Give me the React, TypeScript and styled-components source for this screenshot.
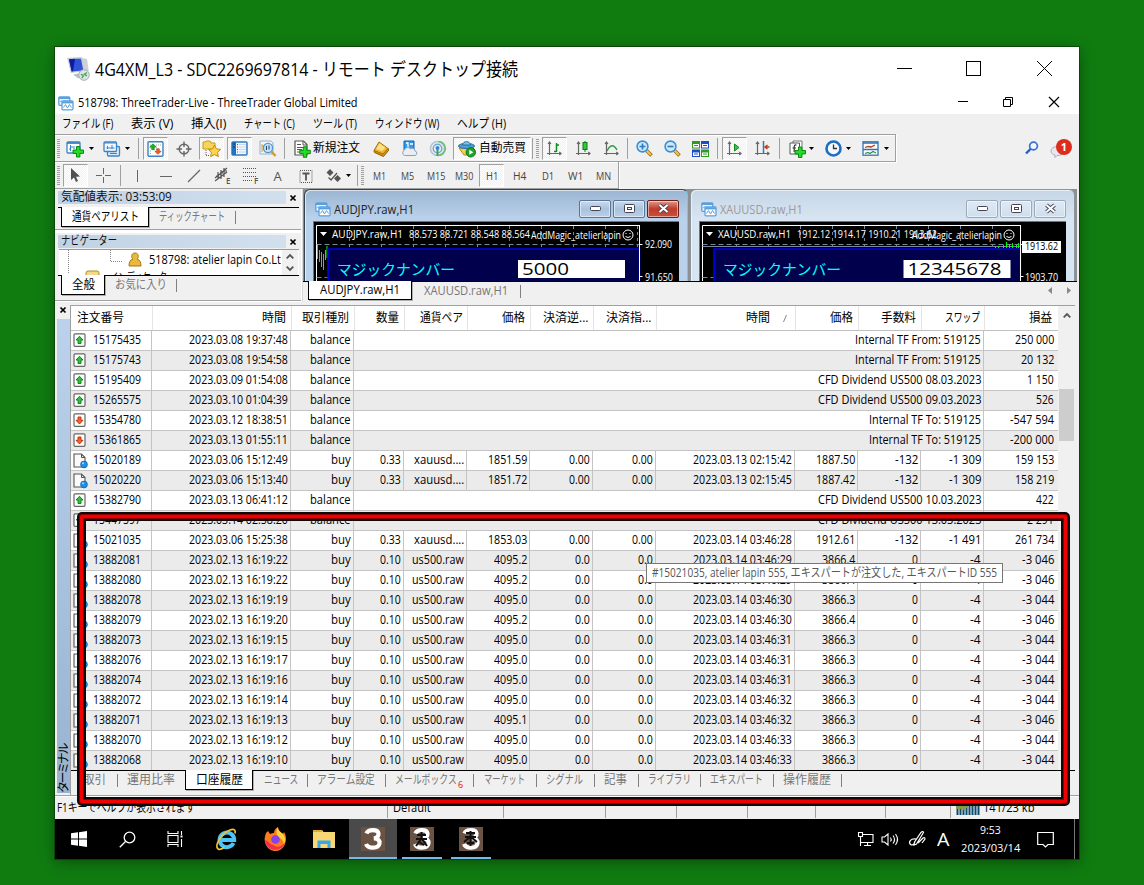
import React, { useLayoutEffect, useRef, useState } from 'react';
import styled, { createGlobalStyle, css } from 'styled-components';

const UI = '"Open Sans", "Noto Sans CJK JP", sans-serif';
const GREY = '#a0a0a0';

const Global = createGlobalStyle`
  body { margin: 0; background: #107c10; font-family: ${UI}; font-size: 12px; color: #000; }
  * { box-sizing: border-box; }
  svg { display: block; flex: none; overflow: visible; }
`;

/* ---------- condensed text, squeezed to a given width ---------- */
const FitBox = styled.span<{ $w: number; $ml?: number; $up?: number; $c?: string; $size?: number }>`
  display: block;
  flex: none;
  width: ${p => p.$w}px;
  margin-left: ${p => p.$ml || 0}px;
  padding-bottom: ${p => p.$up || 0}px;
  white-space: pre;
  line-height: 18px;
  font-size: ${p => p.$size || 12}px;
  color: ${p => p.$c || 'inherit'};
`;
const FitText = styled.span`
  display: inline-block;
  transform-origin: left center;
`;
type FitProps = { w: number; ml?: number; up?: number; c?: string; size?: number; children: string };
function Fit({ w, ml, up, c, size, children }: FitProps) {
  const ref = useRef<HTMLSpanElement>(null);
  const [scale, setScale] = useState(1);
  useLayoutEffect(() => {
    const el = ref.current;
    if (el && el.offsetWidth) setScale(w / el.offsetWidth);
  }, [w, children]);
  return (
    <FitBox $w={w} $ml={ml} $up={up} $c={c} $size={size}>
      <FitText ref={ref} style={{ transform: `scaleX(${scale})` }}>{children}</FitText>
    </FitBox>
  );
}

/* ---------- window ---------- */
const Desktop = styled.div`
  width: 1144px;
  height: 885px;
  padding: 47px 65px 26px 55px;
  background: #107c10;
  overflow: hidden;
`;
const Session = styled.div`
  position: relative;
  display: flex;
  flex-direction: column;
  width: 1024px;
  height: 812px;
  background: #f0f0f0;
  box-shadow: 0 0 0 1px rgba(10, 60, 10, 0.75), 0 3px 14px rgba(0, 0, 0, 0.38);
`;
const RemoteTitle = styled.div`
  display: flex;
  align-items: center;
  height: 44px;
  padding: 0 27px 0 12px;
  background: #fff;
`;
const AppTitle = styled.div`
  display: flex;
  align-items: center;
  height: 23px;
  padding: 0 20px 0 3px;
  background: #fff;
`;
const Controls = styled.div<{ $gap: number; $up?: number }>`
  display: flex;
  align-items: center;
  align-self: center;
  gap: ${p => p.$gap}px;
  margin-left: auto;
  padding-bottom: ${p => p.$up || 0}px;
`;
const MenuBar = styled.div`
  display: flex;
  align-items: center;
  height: 20px;
  background: #f0f0f0;
`;

/* ---------- toolbars ---------- */
const ToolbarRow = styled.div<{ $h: number }>`
  display: flex;
  align-items: flex-start;
  height: ${p => p.$h}px;
`;
const Toolbar = styled.div<{ $top?: boolean }>`
  display: flex;
  align-items: flex-start;
  height: ${p => (p.$top ? 28 : 27)}px;
  padding-top: 2px;
  border: 0 solid ${GREY};
  border-width: ${p => (p.$top ? 1 : 0)}px 1px 1px 0;
  box-shadow: 1px 1px 0 #fff, inset 0 1px 0 #fff;
`;
const Grip = styled.div<{ $ml: number }>`
  width: 3px;
  height: 19px;
  margin: 2px 0 0 ${p => p.$ml}px;
  background: repeating-linear-gradient(#a0a0a0 0 1px, #f0f0f0 1px 2px);
`;
const Sep = styled.div<{ $ml: number }>`
  width: 1px;
  height: 21px;
  margin: 1px 0 0 ${p => p.$ml}px;
  background: #a0a0a0;
`;
const Tool = styled.div<{ $w?: number; $ml?: number; $on?: boolean }>`
  display: flex;
  flex: none;
  align-items: center;
  justify-content: center;
  width: ${p => p.$w || 25}px;
  height: 23px;
  margin-left: ${p => p.$ml ?? 3}px;
  color: #555;
  ${p => p.$on && css`
    border: 1px solid;
    border-color: #a0a0a0 #fff #fff #a0a0a0;
    background: repeating-conic-gradient(#fff 0 25%, #f0f0f0 0 50%) 0 0 / 2px 2px;
  `}
`;
const Notice = styled.div`
  position: relative;
  margin-left: 11px;
`;
const Badge = styled.div`
  position: absolute;
  left: 5px;
  top: -1px;
  width: 16px;
  height: 16px;
  border-radius: 8px;
  background: #dd2c1e;
  color: #fff;
  font: bold 11px/16px ${UI};
  text-align: center;
`;

/* ---------- docks ---------- */
const Docks = styled.div`
  display: flex;
  height: 113px;
`;
const DockColumn = styled.div`
  width: 248px;
  border-right: 1px solid #d8d8d8;
  background: #fff;
`;
const Dock = styled.div<{ $h: number; $mb: number }>`
  height: ${p => p.$h}px;
  margin: 0 1px ${p => p.$mb}px 0;
  padding: 2px 2px 0 3px;
  background: #f0f0f0;
  border-bottom: 1px solid ${GREY};
`;
const DockHead = styled.div`
  display: flex;
  align-items: center;
  justify-content: space-between;
  height: 13px;
  padding-right: 3px;
`;
const DockCaption = styled.div`
  display: flex;
  align-items: center;
  width: 228px;
  height: 13px;
  padding-left: 3px;
  background: linear-gradient(90deg, #c0d2e4, #d2e0ee);
`;
const Tabs = styled.div<{ $h: number; $pl?: number; $mt?: number }>`
  display: flex;
  align-items: flex-start;
  height: ${p => p.$h}px;
  margin-top: ${p => p.$mt || 0}px;
  padding-left: ${p => p.$pl || 0}px;
  border-top: 1px solid #000;
  background: #f0f0f0;
`;
const ActiveTab = styled.div<{ $w: number; $h?: number; $ml?: number }>`
  display: flex;
  align-items: center;
  justify-content: center;
  width: ${p => p.$w}px;
  height: ${p => p.$h || 20}px;
  margin: -1px 0 0 ${p => p.$ml || 0}px;
  background: #fff;
  border: solid #000;
  border-width: 0 1px 1px 1px;
  box-shadow: 1px 1px 0 #b0b0b0;
`;
const TabBar = styled.i<{ $ml: number }>`
  width: 1px;
  height: 13px;
  margin: 3px 0 0 ${p => p.$ml}px;
  background: #808080;
`;
const Tree = styled.div`
  display: flex;
  height: 26px;
  margin: 1px 0 0 1px;
  overflow: hidden;
  background: #fff;
  border-top: 1px solid #999;
`;
const TreeLines = styled.div`
  width: 223px;
`;
const TreeRow = styled.div<{ $pl: number; $h: number }>`
  display: flex;
  align-items: center;
  height: ${p => p.$h}px;
  padding-left: ${p => p.$pl}px;
`;
const MiniScroll = styled.div`
  display: flex;
  flex-direction: column;
  align-items: center;
  justify-content: space-around;
  width: 16px;
  background: #f0f0f0;
`;

/* ---------- chart windows ---------- */
const Mdi = styled.div`
  flex: 1;
  display: flex;
  flex-direction: column;
  padding-right: 2px;
`;
const MdiArea = styled.div`
  display: flex;
  gap: 2px;
  height: 92px;
  padding: 0 1px;
  overflow: hidden;
  background: #8f8f8f;
`;
const ChartWindow = styled.div<{ $w: number; $active?: boolean }>`
  width: ${p => p.$w}px;
  height: 120px;
  padding: 0 8px;
  border: 1px solid ${p => (p.$active ? '#34444f' : '#8b96a0')};
  border-right-color: ${p => (p.$active ? '#5bd3ee' : '#8b96a0')};
  border-radius: 6px 6px 0 0;
  background: ${p => (p.$active ? 'linear-gradient(#9bb5d2, #b9d1ea 28px, #b9d1ea)' : 'linear-gradient(#c6d6e6, #d7e4f2 28px)')};
  box-shadow: inset 1px 1px 0 rgba(255, 255, 255, 0.6);
`;
const ChartCaption = styled.div`
  display: flex;
  align-items: center;
  height: 31px;
  padding: 6px 0 0 2px;
`;
const CaptionButtons = styled.div`
  display: flex;
  gap: 2px;
  margin-left: auto;
`;
const CaptionButton = styled.div<{ $bg: string; $line: string }>`
  display: flex;
  align-items: center;
  justify-content: center;
  width: 32px;
  height: 18px;
  border: 1px solid ${p => p.$line};
  border-radius: 2px;
  background: ${p => p.$bg};
  box-shadow: inset 0 0 0 1px rgba(255, 255, 255, 0.5);
`;
const Plot = styled.div`
  height: 90px;
  background: #000;
  border: solid #6b7580;
  border-width: 1px 0 0 1px;
`;
const Scrollers = styled.div`
  display: flex;
  gap: 13px;
  margin: 5px 6px 0 auto;
`;

/* ---------- terminal ---------- */
const Terminal = styled.div`
  display: flex;
  height: 494px;
  padding-top: 3px;
  border-bottom: 1px solid ${GREY};
`;
const Rail = styled.div`
  display: flex;
  flex-direction: column;
  align-items: center;
  width: 15px;
  padding-top: 2px;
`;
const RailBand = styled.div`
  display: flex;
  flex-direction: column;
  justify-content: flex-end;
  width: 13px;
  height: 474px;
  margin: 6px 0 0 1px;
  background: linear-gradient(#bcd2ec, #98b3d0);
`;
const RailText = styled.div`
  writing-mode: vertical-rl;
  text-orientation: sideways;
  transform: rotate(180deg);
  font-size: 12px;
  line-height: 13px;
  height: 50px;
  letter-spacing: -2.4px;
  white-space: nowrap;
`;
const TerminalBody = styled.div`
  width: 1005px;
  border-left: 1px solid ${GREY};
  border-top: 1px solid ${GREY};
`;
const GridArea = styled.div`
  display: flex;
  height: 464px;
  overflow: hidden;
  background: #fff;
`;
const Table = styled.div`
  width: 987px;
`;
const cols = '81px 139px 63px 50px 63px 63px 63px 63px 139px 63px 63px 63px 74px';
const HeadRow = styled.div`
  display: grid;
  grid-template-columns: ${cols};
  height: 25px;
  border-bottom: 1px solid #c0c0c0;
`;
const HeadCell = styled.div<{ $pr: number }>`
  display: flex;
  align-items: center;
  justify-content: flex-end;
  padding-right: ${p => p.$pr}px;
  box-shadow: 1px 0 0 #e4e4e4;
`;
const Row = styled.div<{ $alt: boolean }>`
  display: grid;
  grid-template-columns: ${cols};
  height: 20px;
  background: ${p => (p.$alt ? '#ebebeb' : '#fff')};
  border-bottom: 1px solid #c4c4c4;
`;
const Cell = styled.div<{ $span?: number; $first?: boolean; $last?: boolean }>`
  display: flex;
  align-items: center;
  justify-content: ${p => (p.$first ? 'flex-start' : 'flex-end')};
  grid-column: span ${p => p.$span || 1};
  padding: 0 ${p => (p.$last ? 4 : 2)}px 1px ${p => (p.$first ? 2 : 0)}px;
  border-right: ${p => (p.$last ? 0 : 1)}px solid #c4c4c4;
`;
const ScrollBar = styled.div`
  display: flex;
  flex-direction: column;
  align-items: center;
  width: 17px;
  padding: 7px 1px 0;
  background: #f0f0f0;
`;
const Thumb = styled.div`
  width: 15px;
  height: 52px;
  margin-top: 71px;
  background: #cdcdcd;
`;
const BottomTab = styled.div<{ $ml: number }>`
  margin-left: ${p => p.$ml}px;
`;

/* ---------- status bar, task bar ---------- */
const Status = styled.div`
  display: flex;
  align-items: center;
  height: 23px;
  padding-left: 2px;
  border-top: 1px solid #fff;
`;
const StatusSep = styled.i<{ $ml: number }>`
  width: 1px;
  height: 19px;
  margin-left: ${p => p.$ml}px;
  background: ${GREY};
`;
const TaskBar = styled.div`
  display: flex;
  height: 40px;
  background: #000;
  color: #fff;
`;
const TaskItem = styled.div<{ $ml?: number; $on?: boolean; $run?: boolean }>`
  display: flex;
  align-items: center;
  justify-content: center;
  width: 48px;
  margin-left: ${p => p.$ml || 0}px;
  background: ${p => (p.$on ? '#4a4a4a' : p.$run ? 'linear-gradient(#76b9ed, #76b9ed) 4px 38px / 40px 2px no-repeat' : 'none')};
  border-bottom: ${p => (p.$on ? '2px solid #76b9ed' : '0')};
  padding-top: ${p => (p.$on ? 2 : 0)}px;
`;
const Tray = styled.div`
  display: flex;
  align-items: center;
  margin-left: auto;
`;
const ClockBox = styled.div`
  display: flex;
  flex-direction: column;
  align-items: center;
  width: 60px;
  margin-left: 11px;
`;
const ShowDesktop = styled.i`
  width: 1px;
  height: 40px;
  margin: 0 4px 0 20px;
  background: #777;
`;

/* ---------- overlays ---------- */
const Marker = styled.div`
  position: absolute;
  left: 22px;
  top: 465px;
  width: 993px;
  height: 294px;
  border: 2px solid #100808;
  border-radius: 5px;
  box-shadow: inset 0 0 0 1px #8a0000, inset 0 0 0 4px #f00000, inset 0 0 0 5px #8a0000, inset 0 0 0 7px #100808;
`;
const Tip = styled.div`
  position: absolute;
  left: 591px;
  top: 516px;
  display: flex;
  align-items: center;
  width: 357px;
  height: 20px;
  padding-left: 5px;
  background: #fff;
  border: 1px solid #767676;
  color: #575757;
`;

/* ---------- icons ---------- */
const Svg = ({ s = 16, h, children }: { s?: number; h?: number; children: React.ReactNode }) => (
  <svg width={s} height={h || s} viewBox={`0 0 ${s} ${h || s}`} fill="none">{children}</svg>
);
const Caret = () => <Svg s={5} h={3}><path d="M0 0h5L2.5 3z" fill="#000" /></Svg>;
const CloseX = ({ s = 6, w = 1.7 }: { s?: number; w?: number }) => (
  <Svg s={s}><path d={`M.5 .5L${s - 0.5} ${s - 0.5}M${s - 0.5} .5L.5 ${s - 0.5}`} stroke="#000" strokeWidth={w} /></Svg>
);
const Chevron = ({ down }: { down?: boolean }) => (
  <Svg s={8} h={5}><path d={down ? 'M.7.7L4 4 7.3.7' : 'M.7 4.3L4 1l3.3 3.3'} stroke="#555" strokeWidth="1.8" /></Svg>
);
const Plus = ({ x, y }: { x: number; y: number }) => (
  <path transform={`translate(${x} ${y})`} d="M4 .5h3.4V4H11v3.4H7.4V11H4V7.4H.5V4H4z" fill="#23dc23" stroke="#0a8a12" />
);
const ChartPair = () => (
  <Svg s={16}>
    <rect x=".8" y="1.8" width="11" height="8.5" rx="1" fill="#e8f3fd" stroke="#5aa0dc" strokeWidth="1.3" />
    <path d="M1 3h11" stroke="#5aa0dc" strokeWidth="2" />
    <path d="M2.500 7l1-1.500" stroke="#5aa0dc" />
    <rect x="4" y="6" width="11" height="8.8" rx="1" fill="#fff" stroke="#5aa0dc" strokeWidth="1.3" />
    <path d="M4 7.4h11" stroke="#5aa0dc" strokeWidth="2" />
    <path d="M5.5 12.500l2-3 2 3.500 2-3.500 2 3" stroke="#5aa0dc" />
  </Svg>
);
const RemoteIcon = () => (
  <Svg s={23} h={24}>
    <path d="M1 1.5L14.500 .8l2.600 13-12.800 1.500z" fill="#3152d8" stroke="#c8ccd4" strokeWidth="1.3" />
    <path d="M2 2.200l6-.5L6 14l-1.400.4z" fill="#0c1da0" />
    <path d="M14.500 1L20 2l1.800 12-4.600.5z" fill="#cdd1d6" />
    <path d="M6 17.500l9-1.500 4 3-8 2.200z" fill="#b9bec6" />
    <circle cx="17" cy="18" r="5.300" fill="#dfe3e3" stroke="#a8aeae" />
    <path d="M14 17l2.300 2-1.500 2M20 15.500l-2.700 1.700 2.500 1.700" stroke="#3fae5a" strokeWidth="1.400" />
  </Svg>
);
const NewChart = () => (
  <Svg s={18}>
    <rect x="1" y="2" width="13" height="11" rx="1" fill="#fff" stroke="#3b83c5" strokeWidth="1.3" />
    <path d="M1 3h13" stroke="#3b83c5" strokeWidth="1.8" />
    <path d="M4.500 5v6M3 9h1.500M4.500 7H7M8 6v3" stroke="#3b83c5" />
    <Plus x={6.5} y={6} />
  </Svg>
);
const Profiles = () => (
  <Svg s={18}>
    <rect x="4.500" y="6.500" width="12" height="9.500" rx="1" fill="#dcecfb" stroke="#3b83c5" strokeWidth="1.3" />
    <rect x="1" y="2" width="12.500" height="9.500" rx="1" fill="#f2f8ff" stroke="#3b83c5" strokeWidth="1.3" />
    <path d="M1 3h12.500M3.500 8h8M4.500 6v3M9 5v4M7 13.500h7" stroke="#3b83c5" />
  </Svg>
);
const MarketWatch = () => (
  <Svg s={17} h={16}>
    <rect x="1" y=".8" width="15" height="14.400" rx="1" fill="#fff" stroke="#3b83c5" strokeWidth="1.4" />
    <path d="M3 4h1M3 7h1M3 10h1M3 12.500h1M9 4h5M9 7h1" stroke="#9aa" strokeDasharray="1 1" />
    <path d="M6 2.800L9.300 6H7.300v2.700H4.700V6h-2z" fill="#18b52a" stroke="#0a7a18" strokeWidth=".6" />
    <path d="M11 13.300L7.800 10.300h1.900V7.800h2.600v2.500h1.900z" fill="#f0602c" stroke="#b5300c" strokeWidth=".6" />
  </Svg>
);
const Target = () => (
  <Svg s={16}><circle cx="8" cy="8" r="4.800" stroke="#666" strokeWidth="1.500" /><path d="M8 .5v5.500M8 10v5.500M.5 8H6M10 8h5.500" stroke="#666" strokeWidth="1.400" /></Svg>
);
const Star = 'M6 0l1.900 3.900 4.200.5-3.100 2.900.9 4.300L6 9.500l-3.900 2.100.9-4.300L-.1 4.400l4.200-.5z';
const NavIcon = () => (
  <Svg s={19} h={17}>
    <path d="M1 9V2h2l1-1h4l1 2h4v6z" fill="#f8d55a" stroke="#c79b17" />
    <path d="M4 10v6M4 15.500h4" stroke="#666" strokeDasharray="1 1" />
    <g transform="translate(6.500 5)"><path d={Star} fill="#ffd54a" stroke="#c58a12" /></g>
  </Svg>
);
const TerminalIcon = () => (
  <Svg s={17} h={15}>
    <rect x="1" y="1" width="15" height="13" rx="1" fill="#eef6ff" stroke="#2f7cc4" strokeWidth="1.500" />
    <path d="M1 1h4v13H1z" fill="#2272c4" /><path d="M2.500 3h1M2.500 6h1" stroke="#003" />
    <path d="M6 3.500h2M6 6h2M6 8.500h2M6 11h2" stroke="#c33" strokeDasharray="1 1" /><path d="M8 3.500h7M8 6h7M8 8.500h7M8 11h7" stroke="#c8d8e8" />
  </Svg>
);
const Tester = () => (
  <Svg s={18}>
    <path d="M1 1h11l2 2v11H1z" fill="#eef4fb" stroke="#9ab0c6" /><path d="M3 12V4M6 12V5M3 6h6" stroke="#d8a030" />
    <circle cx="9" cy="8" r="4.600" fill="#bfe0f8" fillOpacity=".8" stroke="#4f9ad6" strokeWidth="1.300" />
    <path d="M7.500 6v4M10 5.500v4" stroke="#246" /><path d="M12.500 11.500l4 4.500" stroke="#d89c1c" strokeWidth="2.400" />
  </Svg>
);
const NewOrder = () => (
  <Svg s={17} h={18}>
    <path d="M1 1h8.500L13 4.500V15H1z" fill="#fff" stroke="#555" strokeWidth="1.200" />
    <path d="M9 1v4h4M3 4.500h4M3 7.500h7M3 9.500h5M3 12h3" stroke="#555" /><Plus x={5.3} y={6.3} />
  </Svg>
);
const Book = () => (
  <Svg s={16}><path d="M1 9.500l.5 2 9 4 5-6V7.500" stroke="#8a5c08" fill="#d9941a" /><path d="M6 1l9 6.500-5 5.500L1 9.500z" fill="#f0b92c" stroke="#a36d08" /><path d="M6.500 2.300l6 4.200-3.500 3.500-6-2z" fill="#fbe08a" /></Svg>
);
const Cloud = () => (
  <Svg s={17}><path d="M3 1h10v9H3z" fill="#2d9cf0" stroke="#0b62b5" /><path d="M5 3h2v5M9 4h3" stroke="#fff" strokeWidth="1.300" /><path d="M3.500 15.500a3 3 0 010-5.500 3.200 3.200 0 015.800-1.200A3 3 0 0114 11a2.300 2.300 0 010 4.500z" fill="#e9eef5" stroke="#8ea0b8" /></Svg>
);
const Signal = () => (
  <Svg s={17}><circle cx="8.500" cy="8.500" r="7" stroke="#b6c6d8" strokeWidth="1.700" /><circle cx="8.500" cy="8.500" r="4.300" stroke="#79a6cf" strokeWidth="1.500" /><path d="M9.500 1.700a6.800 6.800 0 010 13.600" stroke="#6cbf7c" strokeWidth="1.800" /><circle cx="8.500" cy="8" r="2" fill="#2b8ae0" /><path d="M8.500 9v7" stroke="#3fa058" strokeWidth="2" /></Svg>
);
const Expert = () => (
  <Svg s={18}><path d="M1 8h15l-5 7H6z" fill="#f6cf55" stroke="#c08a17" /><ellipse cx="8.500" cy="6" rx="8" ry="2.600" fill="#4a9fd6" stroke="#236f9f" /><path d="M4.500 5C5 .5 12 .5 12.500 5z" fill="#7cc5ee" stroke="#236f9f" /><circle cx="12.800" cy="12.300" r="4.700" fill="#1fa32c" stroke="#0d7718" /><path d="M11.300 9.800l4 2.500-4 2.500z" fill="#fff" /></Svg>
);
const Axes = ({ children }: { children?: React.ReactNode }) => (
  <Svg s={15}><path d="M2.500 1v13M0 12.500h14M1 3l1.500-2L4 3M12.300 11l1.700 1.500-1.700 1.500" stroke="#666" strokeWidth="1.200" />{children}</Svg>
);
const Magnifier = ({ plus }: { plus?: boolean }) => (
  <Svg s={17}><path d="M10.500 10.500l5 5" stroke="#8a6410" strokeWidth="3.600" /><path d="M10.500 10.500l4.500 4.500" stroke="#f1c648" strokeWidth="2.200" /><circle cx="6.500" cy="6.500" r="5.400" fill="#cfe9fb" stroke="#3d8fcf" strokeWidth="1.600" /><path d={plus ? 'M3.500 6.500h6M6.500 3.500v6' : 'M3.500 6.500h6'} stroke="#2c7dbd" strokeWidth="1.700" /></Svg>
);
const Tiles = () => (
  <Svg s={17} h={16}>
    {[[0, 0, '#2e9a22'], [9, 0, '#1e4fc0'], [0, 8.5, '#1e4fc0'], [9, 8.5, '#2e9a22']].map(([x, y, f]) => (
      <g key={`${x}-${y}`} transform={`translate(${x} ${y})`}><rect width="8" height="7.500" fill={f as string} /><rect x="1" y="3" width="6" height="3.500" fill="#fff" /><path d="M2 4.500h4" stroke={f as string} /></g>
    ))}
  </Svg>
);
const Indicators = () => (
  <Svg s={17} h={18}><path d="M4 1h9v11H4z" fill="#fff" stroke="#777" /><path d="M1 3h9.500v11H1z" fill="#fff" stroke="#555" /><path d="M7.500 5.200c-2-.8-2.300.6-2.300 2V12M3.500 8h3.500" stroke="#333" strokeWidth="1.200" /><Plus x={5.5} y={6.5} /></Svg>
);
const ClockIcon = () => (
  <Svg s={17}><circle cx="8.500" cy="8.500" r="7" fill="#f4f8fc" stroke="#1b6dc6" strokeWidth="2.600" /><path d="M8.500 4.500v4h3.500" stroke="#333" strokeWidth="1.300" /></Svg>
);
const Template = () => (
  <Svg s={17} h={15}><rect x="1" y=".8" width="15" height="13.400" fill="#fff" stroke="#2f74b5" strokeWidth="1.300" /><path d="M1 2h15M1 8.500h15" stroke="#2f74b5" strokeWidth="1.500" /><path d="M3 6.500l3-1 3 .5 4-2" stroke="#b03a20" strokeWidth="1.300" /><path d="M3 12.500l3-1 2 1 3-2 3 1.500" stroke="#2c8f3c" strokeWidth="1.200" /></Svg>
);
const DrawText = ({ d, t }: { d: React.ReactNode; t?: string }) => (
  <Svg s={17} h={17}>{d}{t && <text x="12" y="17" fontSize="8" fontFamily="Open Sans" fontWeight="600" fill="#555">{t}</text>}</Svg>
);
const DocIcon = ({ kind }: { kind: 'up' | 'down' | 'deal' }) => kind === 'deal' ? (
  <Svg s={15} h={15}>
    <path d="M1 1h7.500L12 4.500V14H1z" fill="#fafafa" stroke="#555" strokeWidth="1.100" /><path d="M8.500 1v3.500H12" stroke="#555" />
    <circle cx="11" cy="11.500" r="3.400" fill="#1e90e8" stroke="#0a62b0" strokeWidth=".8" /><circle cx="10" cy="10.300" r="1" fill="#a5dcff" />
  </Svg>
) : (
  <Svg s={15} h={14}>
    <rect x="1" y=".8" width="11" height="12.500" rx="1" fill="#fff" stroke="#666" strokeWidth="1.200" />
    {kind === 'up'
      ? <path d="M6.500 3.300L10 7H8v3.500H5V7H3z" fill="#2fc43a" stroke="#0b7a18" strokeWidth=".9" />
      : <path d="M6.500 11L3 7.300h2V4h3v3.300h2z" fill="#f4622c" stroke="#b32d0a" strokeWidth=".9" />}
  </Svg>
);
const Three = ({ v }: { v: number }) => (
  <Svg s={24}>
    <rect width="24" height="24" fill="#6b5344" />
    <path d="M5.500 6.500C7 2 17 2 17.500 6.500c.2 3-2 4.300-4.500 4.800 4 .3 6 2.200 5.500 5.200C17.500 22 7 22 5 17" stroke="#fff" strokeWidth="4.200" />
    {v > 0 && <path d={v === 1 ? 'M7 8h9M11.500 5v6M6 12h11M11 12l-5 7M12 12l5 7M9 15l5 3' : 'M7 6h9M11.500 4v15M6 10h11M11 10l-6 5M12 10l6 5M8 16h7'} stroke="#111" strokeWidth="2" />}
  </Svg>
);

/* ---------- charts ---------- */
type ChartData = { title: string; quote: string; qx: number; qw: number; right: number; value: string; vw: number; name: number; first: number; tag?: string; low: string; grid: number };
const chartText = { fontFamily: UI, fontSize: 10.5, fill: '#fff', lengthAdjust: 'spacingAndGlyphs' as const };
/* plot coordinates start at the black area's upper left corner */
const PlotDrawing = ({ d }: { d: ChartData }) => {
  const left = d.tag ? 2.5 : 2.5;
  return (
    <svg width={366} height={58} viewBox="0 0 366 58" fill="none">
      <path d={`M${left} 60V3.500H${d.right}V60`} stroke="#fff" />
      {Array.from({ length: 10 }, (_, i) => d.grid + i * 32).filter(x => x < d.right).map(x => (
        <path key={x} d={`M${x} 4V26`} stroke="#778899" strokeDasharray="3 3" />
      ))}
      <path d={`M${left} 22.500H${d.right}M${left} 55.500H14`} stroke="#778899" strokeDasharray="5 3" />
      {d.tag && <path d={`M${left} 24.500H${d.right}`} stroke="#778899" />}
      {d.tag
        ? <path d="M295.500 26v-2M298.500 26v-2M303.500 26v-3M306.500 26v-6M309.500 26v-4M312.500 26v-5M316.500 26v-3M318.500 26v-5" stroke="#00ff00" />
        : <path d="M3.500 22v15M5.500 28v12M7.500 30v15M9.500 32v16M11.500 28v10M13 24v12" stroke="#00ff00" />}
      <rect x="14" y="27" width={d.right - 14} height="40" fill="#00004c" stroke="#0000f0" strokeWidth="1.500" />
      <path d={`M${d.right} 3V60`} stroke="#fff" />
      <path d="M6 10h7l-3.500 4z" fill="#fff" />
      <text x="18" y="16" textLength={d.tag ? 73 : 71} {...chartText}>{d.title}</text>
      <text x={d.qx} y="16" textLength={d.qw} {...chartText}>{d.quote}</text>
      <text x={d.name} y="17" textLength="90" {...chartText} fontSize={11}>AddMagic_atelierlapin</text>
      <g transform={`translate(${d.name + 97} 13)`} stroke="#fff"><circle r="5" /><path d="M-2.500 1.500q2.500 2 5 0M-2 -2v1M2 -2v1" /></g>
      <text x="23" y="52.500" textLength="118" {...chartText} fontSize={15} fill="#00ffff">マジックナンバー</text>
      <rect x={d.first} y="38" width="107" height="18" fill="#fff" />
      <text x={d.first + 4} y="53" textLength={d.vw} {...chartText} fontSize={17} fill="#000">{d.value}</text>
      <path d={`M${d.right} 22.500h3M${d.right} 54.500h3`} stroke="#fff" />
      {d.tag && <rect x="322" y="19" width="39" height="12" fill="#fff" />}
      <text x={d.tag ? 325 : 331} y={d.tag ? 28 : 26} textLength={d.tag ? 33 : 27} {...chartText} fontSize={10} fill={d.tag ? '#000' : '#fff'}>{d.tag || '92.090'}</text>
      <text x={d.tag ? 325 : 331} y="59" textLength={d.tag ? 33 : 28} {...chartText} fontSize={10}>{d.low}</text>
    </svg>
  );
};
const charts: ChartData[] = [
  { title: 'AUDJPY.raw,H1', quote: '88.573 88.721 88.548 88.564', qx: 95, qw: 121, right: 325.5, value: '5000', vw: 47, name: 217, first: 204, low: '91.650', grid: 35.5 },
  { title: 'XAUUSD.raw,H1', quote: '1912.12 1914.17 1910.21 1913.62', qx: 97, qw: 140, right: 320.5, value: '12345678', vw: 94, name: 212, first: 203.5, tag: '1913.62', low: '1903.70', grid: 36.5 },
];
const ChartFrame = ({ d, active, w }: { d: ChartData; active?: boolean; w: number }) => {
  const bg = active ? 'linear-gradient(#c9dbee, #a9c3de 50%, #b9d0e8)' : 'linear-gradient(#dfe9f4, #cfdeec)';
  const line = active ? '#5d7590' : '#9aa9b8';
  return (
    <ChartWindow $w={w} $active={active}>
      <ChartCaption>
        <ChartPair />
        <Fit w={active ? 80 : 83} ml={3} c={active ? '#222' : '#9a9a9a'} size={13}>{d.title}</Fit>
        <CaptionButtons>
          <CaptionButton $bg={bg} $line={line}><Svg s={11} h={5}><rect x=".5" y=".5" width="10" height="4" rx="1" fill="#fff" stroke="#445" /></Svg></CaptionButton>
          <CaptionButton $bg={bg} $line={line}><Svg s={11} h={9}><rect x=".5" y=".5" width="10" height="8" rx="1" fill="#fff" stroke="#445" /><rect x="3.500" y="3.500" width="4" height="2" stroke="#445" /></Svg></CaptionButton>
          <CaptionButton $bg={active ? 'linear-gradient(#e09a8c, #c23a2a 50%, #c8503c)' : bg} $line={active ? '#6b1d18' : line}>
            <Svg s={11} h={9}><path d="M1.500 1l8 7M9.500 1l-8 7" stroke="#445" strokeWidth="3.800" /><path d="M1.500 1l8 7M9.500 1l-8 7" stroke="#fff" strokeWidth="2" /></Svg>
          </CaptionButton>
        </CaptionButtons>
      </ChartCaption>
      <Plot><PlotDrawing d={d} /></Plot>
    </ChartWindow>
  );
};

/* ---------- data ---------- */
type Deal = string[];
const rows: Deal[] = [
  ['up', '15175435', '2023.03.08 19:37:48', 'Internal TF From: 519125', '250 000'],
  ['up', '15175743', '2023.03.08 19:54:58', 'Internal TF From: 519125', '20 132'],
  ['up', '15195409', '2023.03.09 01:54:08', 'CFD Dividend US500 08.03.2023', '1 150'],
  ['up', '15265575', '2023.03.10 01:04:39', 'CFD Dividend US500 09.03.2023', '526'],
  ['down', '15354780', '2023.03.12 18:38:51', 'Internal TF To: 519125', '-547 594'],
  ['down', '15361865', '2023.03.13 01:55:11', 'Internal TF To: 519125', '-200 000'],
  ['deal', '15020189', '2023.03.06 15:12:49', '0.33', 'xauusd....', '1851.59', '0.00', '0.00', '2023.03.13 02:15:42', '1887.50', '-132', '-1 309', '159 153'],
  ['deal', '15020220', '2023.03.06 15:13:40', '0.33', 'xauusd....', '1851.72', '0.00', '0.00', '2023.03.13 02:15:45', '1887.42', '-132', '-1 309', '158 219'],
  ['up', '15382790', '2023.03.13 06:41:12', 'CFD Dividend US500 10.03.2023', '422'],
  ['up', '15447597', '2023.03.14 02:58:20', 'CFD Dividend US500 13.03.2023', '2 291'],
  ['deal', '15021035', '2023.03.06 15:25:38', '0.33', 'xauusd....', '1853.03', '0.00', '0.00', '2023.03.14 03:46:28', '1912.61', '-132', '-1 491', '261 734'],
  ...([
    ['81', '22', '4095.2', '29', '3866.4', '-3 046'],
    ['80', '22', '4095.2', '29', '3866.4', '-3 046'],
    ['78', '19', '4095.0', '30', '3866.3', '-3 044'],
    ['79', '20', '4095.2', '30', '3866.4', '-3 046'],
    ['73', '15', '4095.0', '31', '3866.3', '-3 044'],
    ['76', '17', '4095.0', '31', '3866.3', '-3 044'],
    ['74', '16', '4095.0', '31', '3866.3', '-3 044'],
    ['72', '14', '4095.0', '32', '3866.3', '-3 044'],
    ['71', '13', '4095.1', '32', '3866.3', '-3 046'],
    ['70', '12', '4095.0', '33', '3866.3', '-3 044'],
    ['68', '10', '4095.0', '33', '3866.3', '-3 044'],
  ].map(([id, s, open, t, close, profit]) => [
    'deal', `138820${id}`, `2023.02.13 16:19:${s}`, '0.10', 'us500.raw', open, '0.0', '0.0', `2023.03.14 03:46:${t}`, close, '0', '-4', profit,
  ])),
];
const words: Record<string, number> = { balance: 41, buy: 20, 'xauusd....': 50, 'us500.raw': 52 };
const widthOf = (s: string) => {
  if (words[s]) return words[s];
  if (s.startsWith('CFD')) return 163;
  if (s.startsWith('Internal')) return s.includes('From') ? 126 : 112;
  return [...s].reduce((n, ch) => n + (ch === '-' ? 5 : '.: '.includes(ch) ? 3 : 6), 0);
};
const Txt = ({ t }: { t: string }) => <Fit w={widthOf(t)}>{t}</Fit>;

const heads: [string, number, number][] = [
  ['注文番号', 47, 28], ['時間', 24, 5], ['取引種別', 47, 5], ['数量', 23, 5], ['通貨ペア', 43, 4], ['価格', 23, 5],
  ['決済逆...', 45, 5], ['決済指...', 45, 5], ['時間', 24, 8], ['価格', 23, 5], ['手数料', 35, 5], ['スワップ', 35, 4], ['損益', 23, 6],
];
const menus: [string, number, number][] = [
  ['ファイル (F)', 51, 7], ['表示 (V)', 42, 18], ['挿入(I)', 35, 18], ['チャート (C)', 51, 18], ['ツール (T)', 44, 18], ['ウィンドウ (W)', 64, 18], ['ヘルプ (H)', 49, 18],
];
/* label, width, space before it, space between it and its divider */
const bottomTabs: [string, number, number, number][] = [
  ['ニュース', 34, 11, 9], ['アラーム設定', 58, 9, 10], ['メールボックス', 62, 9, 0], ['マーケット', 41, 10, 11],
  ['シグナル', 37, 9, 11], ['記事', 23, 9, 11], ['ライブラリ', 43, 9, 9], ['エキスパート', 53, 9, 10], ['操作履歴', 48, 9, 10],
];
const Grey6 = '#777';

export default function App() {
  return (
    <Desktop>
      <Global />
      <Session>
        <RemoteTitle>
          <RemoteIcon />
          <Fit w={423} ml={5} size={18}>4G4XM_L3 - SDC2269697814 - リモート デスクトップ接続</Fit>
          <Controls $gap={55} $up={1}>
            <Svg s={15}><path d="M0 7.500h15" stroke="#000" /></Svg>
            <Svg s={15}><rect x="-.5" y=".5" width="14" height="14" stroke="#000" /></Svg>
            <Svg s={15}><path d="M0 0l15 15M15 0L0 15" stroke="#000" /></Svg>
          </Controls>
        </RemoteTitle>
        <AppTitle>
          <ChartPair />
          <Fit w={280} ml={4}>518798: ThreeTrader-Live - ThreeTrader Global Limited</Fit>
          <Controls $gap={36} $up={2}>
            <Svg s={10}><path d="M1 4.500h10" stroke="#000" /></Svg>
            <Svg s={10}><path d="M2.500 2.500V.5h7v7h-2M.5 2.500h7v7h-7z" stroke="#000" /></Svg>
            <Svg s={10}><path d="M0 0l10 10M10 0L0 10" stroke="#000" strokeWidth="1.200" /></Svg>
          </Controls>
        </AppTitle>
        <MenuBar>{menus.map(([t, w, ml]) => <Fit key={t} w={w} ml={ml}>{t}</Fit>)}</MenuBar>

        <ToolbarRow $h={28}>
          <Toolbar $top>
            <Grip $ml={2} />
            <Tool $w={23}><NewChart /></Tool><Tool $w={10} $ml={0}><Caret /></Tool>
            <Tool $w={23} $ml={4}><Profiles /></Tool><Tool $w={9} $ml={0}><Caret /></Tool>
            <Sep $ml={6} />
            <Tool $on $ml={4}><MarketWatch /></Tool>
            <Tool><Target /></Tool>
            <Tool $on><NavIcon /></Tool>
            <Tool $on><TerminalIcon /></Tool>
            <Tool><Tester /></Tool>
            <Sep $ml={4} />
            <Tool $w={21} $ml={7}><NewOrder /></Tool>
            <Tool $w={47} $ml={0}><Fit w={47} up={2} c="#000">新規注文</Fit></Tool>
            <Tool $w={24} $ml={9}><Book /></Tool>
            <Tool $w={24} $ml={4}><Cloud /></Tool>
            <Tool $w={24} $ml={4}><Signal /></Tool>
            <Tool $on $w={78} $ml={4}><Expert /><Fit w={47} ml={3} up={2} c="#000">自動売買</Fit></Tool>
            <Sep $ml={1} />
            <Grip $ml={3} />
            <Tool $on><Axes><path d="M9.500 2v9M7 10.500h2.500M9.500 4H12" stroke="#128a1c" strokeWidth="1.500" /></Axes></Tool>
            <Tool $ml={4}><Axes><path d="M9 0v11" stroke="#0a7a14" /><rect x="7" y="1.500" width="4" height="7" fill="#2ecc3a" stroke="#0a7a14" /></Axes></Tool>
            <Tool><Axes><path d="M3 10Q8 0 13 9" stroke="#2c9a3c" strokeWidth="1.300" /></Axes></Tool>
            <Sep $ml={3} />
            <Tool $w={24} $ml={4}><Magnifier plus /></Tool>
            <Tool $w={24} $ml={4}><Magnifier /></Tool>
            <Tool $w={24} $ml={4}><Tiles /></Tool>
            <Sep $ml={5} />
            <Tool $on $ml={4}><Axes><path d="M7.500 3l4.500 3.500L7.500 10z" fill="#37c443" stroke="#128a1c" /></Axes></Tool>
            <Tool><Axes><path d="M8.500 0v12" stroke="#2c7ab8" strokeWidth="1.500" /><path d="M14.500 6h-4M12.500 4L10 6l2.500 2" stroke="#c43c10" strokeWidth="1.400" /></Axes></Tool>
            <Sep $ml={4} />
            <Tool $w={22} $ml={6}><Indicators /></Tool><Tool $w={7} $ml={0}><Caret /></Tool>
            <Tool $w={22} $ml={7}><ClockIcon /></Tool><Tool $w={8} $ml={0}><Caret /></Tool>
            <Tool $w={22} $ml={7}><Template /></Tool><Tool $w={10} $ml={0}><Caret /></Tool>
            <Tool $w={4} $ml={0}>{null}</Tool>
          </Toolbar>
          <Controls $gap={0}>
            <Tool $w={16} $ml={0}><Svg s={14}><circle cx="8.500" cy="5" r="3.900" fill="#eef6ff" stroke="#3b6fd0" strokeWidth="1.700" /><path d="M5.500 8L1 12.500" stroke="#2b5fc4" strokeWidth="2.400" /></Svg></Tool>
            <Notice>
              <Svg s={23} h={16}><path d="M0 11c0-6 13-6 13 0 0 4-5 4.500-7 4.500l-2 2V15c-2-.5-4-1.500-4-4z" fill="#e6e8ec" stroke="#a9adb5" /></Svg>
              <Badge>1</Badge>
            </Notice>
            <Tool $w={5} $ml={0}>{null}</Tool>
          </Controls>
        </ToolbarRow>

        <ToolbarRow $h={27}>
          <Toolbar>
            <Grip $ml={2} />
            <Tool $on><Svg s={11} h={15}><path d="M1 0v12l3-2.500L6 14l2-1-2-4.300 4-.2z" fill="#505050" /></Svg></Tool>
            <Tool><Svg s={15}><path d="M7.500 0v6M7.500 9v6M0 7.500h6M9 7.500h6" stroke="#666" /></Svg></Tool>
            <Sep $ml={4} />
            <Tool $w={24} $ml={4}><Svg s={12}><path d="M6.500 0v12" stroke="#666" /></Svg></Tool>
            <Tool $w={24} $ml={5}><Svg s={12}><path d="M0 6.500h12" stroke="#666" /></Svg></Tool>
            <Tool $w={24} $ml={4}><Svg s={12}><path d="M0 12L12 0" stroke="#666" strokeWidth="1.200" /></Svg></Tool>
            <Tool $w={26}><DrawText t="E" d={<path d="M1 11L13 1M1 14l12-9M4 5v8M7 3v9M10 1v9M2 9h3M6 6h3M9 4h4" stroke="#555" strokeWidth="1.200" />} /></Tool>
            <Tool $w={26} $ml={2}><DrawText t="F" d={<path d="M1 1.500h14M1 5.500h14M1 9.500h14M1 13.500h9" stroke="#555" strokeDasharray="1 1" />} /></Tool>
            <Tool $ml={2}><Fit w={8} c="#555" size={13}>A</Fit></Tool>
            <Tool><Svg s={14}><rect x="1" y="1.500" width="12" height="12" stroke="#555" strokeDasharray="1 1" /><path d="M3.500 4.500h7M7 4.500v7" stroke="#555" strokeWidth="1.800" /></Svg></Tool>
            <Tool $w={19} $ml={6}><Svg s={15} h={13}><path d="M4 0l3.500 3.500L4 7 .5 3.500zM11.500 6L15 9.500 11.500 13 8 9.500z" fill="#555" /><path d="M2.500 8.500L5 11l6-7" stroke="#555" strokeWidth="1.300" /></Svg></Tool>
            <Tool $w={9} $ml={1}><Caret /></Tool>
            <Sep $ml={4} />
            <Grip $ml={3} />
            {([['M1', 13], ['M5', 13], ['M15', 18], ['M30', 18], ['H1', 12], ['H4', 13], ['D1', 12], ['W1', 15], ['MN', 15]] as [string, number][]).map(([t, w]) => (
              <Tool key={t} $on={t === 'H1'}><Fit w={w} size={11} c="#444">{t}</Fit></Tool>
            ))}
            <Tool $w={2} $ml={0}>{null}</Tool>
          </Toolbar>
        </ToolbarRow>

        <Docks>
          <DockColumn>
            <Dock $h={41} $mb={3}>
              <DockHead><DockCaption><Fit w={111} up={1} c="#111">気配値表示: 03:53:09</Fit></DockCaption><CloseX /></DockHead>
              <Tabs $h={22} $pl={3} $mt={3}>
                <ActiveTab $w={88}><Fit w={67}>通貨ペアリスト</Fit></ActiveTab>
                <Fit w={66} ml={10} c={Grey6}>ティックチャート</Fit><TabBar $ml={10} />
              </Tabs>
            </Dock>
            <Dock $h={68} $mb={0}>
              <DockHead><DockCaption><Fit w={56} up={1} c="#111">ナビゲーター</Fit></DockCaption><CloseX /></DockHead>
              <Tree>
                <TreeLines>
                  <TreeRow $pl={9} $h={19}>
                    <Svg s={60} h={20}><path d="M.5 0v24M42.500 0v11.500h12" stroke="#888" strokeDasharray="1 1" /></Svg>
                    <Svg s={14}><path d="M7 0c4 0 4 5 2 6 3 1 4 3 4 7H1c0-4 1-6 4-7-2-1-2-6 2-6z" fill="#e8b93c" stroke="#a97808" /></Svg>
                    <Fit w={132} ml={7}>518798: atelier lapin Co.Lt</Fit>
                  </TreeRow>
                  <TreeRow $pl={26} $h={18}>
                    <Svg s={15} h={16}><rect x="1" y="1" width="13" height="13" rx="2" fill="#f2d98b" stroke="#b78a20" /></Svg>
                    <Fit w={57} ml={10}>インディケータ</Fit>
                  </TreeRow>
                </TreeLines>
                <MiniScroll><Chevron /><Chevron down /></MiniScroll>
              </Tree>
              <Tabs $h={22} $pl={3}>
                <ActiveTab $w={44}><Fit w={23}>全般</Fit></ActiveTab>
                <Fit w={52} ml={10} c={Grey6}>お気に入り</Fit><TabBar $ml={9} />
              </Tabs>
            </Dock>
          </DockColumn>
          <Mdi>
            <MdiArea>
              <ChartFrame d={charts[0]} active w={384} />
              <ChartFrame d={charts[1]} w={385} />
            </MdiArea>
            <Tabs $h={20} $pl={5}>
              <ActiveTab $w={104} $h={19}><Fit w={80}>AUDJPY.raw,H1</Fit></ActiveTab>
              <Fit w={84} ml={12} c={Grey6}>XAUUSD.raw,H1</Fit><TabBar $ml={12} />
              <Scrollers>
                <Svg s={5} h={7}><path d="M4 0v7L0 3.500z" fill="#888" /></Svg>
                <Svg s={5} h={7}><path d="M1 0v7l4-3.500z" fill="#888" /></Svg>
              </Scrollers>
            </Tabs>
          </Mdi>
        </Docks>

        <Terminal>
          <Rail><CloseX /><RailBand><RailText>ターミナル</RailText></RailBand></Rail>
          <TerminalBody>
            <GridArea>
              <Table>
                <HeadRow>
                  {heads.map(([t, w, pr], i) => (
                    <HeadCell key={i} $pr={pr}>
                      <Fit w={w}>{t}</Fit>
                      {i === 8 && <FitBox $w={17} $ml={0} $size={8}><Svg s={17} h={18}><path d="M13.500 13l3-7" stroke="#888" /></Svg></FitBox>}
                    </HeadCell>
                  ))}
                </HeadRow>
                {rows.map((r, i) => (
                  <Row key={i} $alt={i % 2 === 1}>
                    <Cell $first><DocIcon kind={r[0] as 'up'} /><Fit w={48} ml={5}>{r[1]}</Fit></Cell>
                    <Cell><Txt t={r[2]} /></Cell>
                    <Cell><Txt t={r[0] === 'deal' ? 'buy' : 'balance'} /></Cell>
                    {r.slice(3).map((t, k, a) => (
                      <Cell key={k} $span={a.length === 2 && k === 0 ? 9 : 1} $last={k === a.length - 1}><Txt t={t} /></Cell>
                    ))}
                  </Row>
                ))}
              </Table>
              <ScrollBar><Chevron /><Thumb /></ScrollBar>
            </GridArea>
            <Tabs $h={25} $pl={12}>
              <Fit w={23} c={Grey6}>取引</Fit><TabBar $ml={11} />
              <Fit w={48} ml={9} c={Grey6}>運用比率</Fit>
              <ActiveTab $w={68} $ml={10}><Fit w={47}>口座履歴</Fit></ActiveTab>
              {bottomTabs.map(([t, w, ml, gap]) => (
                <React.Fragment key={t}>
                  <BottomTab $ml={ml}><Fit w={w} c={Grey6}>{t}</Fit></BottomTab>
                  {gap ? <TabBar $ml={gap} /> : <><FitBox $w={6} $ml={1} $size={9} $c="#f00000"><Svg s={6} h={18}><text x="0" y="17" fontSize="9" fontFamily="Open Sans" fill="#f00000">6</text></Svg></FitBox><TabBar $ml={9} /></>}
                </React.Fragment>
              ))}
            </Tabs>
          </TerminalBody>
        </Terminal>

        <Status>
          <Fit w={138}>F1キーでヘルプが表示されます</Fit>
          <StatusSep $ml={192} />
          <Fit w={38} ml={5}>Default</Fit>
          <StatusSep $ml={72} /><StatusSep $ml={101} /><StatusSep $ml={70} /><StatusSep $ml={70} /><StatusSep $ml={67} /><StatusSep $ml={69} /><StatusSep $ml={64} />
          <Tool $w={24} $ml={5}>
            <Svg s={24} h={14}>
              <path d="M1.500 0v14M4.500 0v14M7.500 2v12M10.500 3v11M13.500 1v13M16.500 0v14M19.500 0v14M22.500 0v14" stroke="#0d4a6e" strokeWidth="2" />
              <path d="M1.500 0v8M4.500 0v8M7.500 2v7M10.500 3v4" stroke="#8a9a10" strokeWidth="2" />
            </Svg>
          </Tool>
          <Fit w={51} ml={3}>141/23 kb</Fit>
        </Status>

        <TaskBar>
          <TaskItem><Svg s={16}><path d="M0 2.300L7 1.300V7.500H0zM8 1.200L16 0v7.500H8zM0 8.500h7v6.200l-7-1zM8 8.500h8V16l-8-1.200z" fill="#fff" /></Svg></TaskItem>
          <TaskItem><Svg s={17}><circle cx="10.500" cy="6.500" r="5.300" stroke="#fff" strokeWidth="1.300" /><path d="M6.500 10.500L.8 16.200" stroke="#fff" strokeWidth="1.300" /></Svg></TaskItem>
          <TaskItem><Svg s={17} h={16}><path d="M1 4.500h10v7H1zM1 0v2.500h10V0M1 16v-2.500h10V16M14.500 0v4M14.500 8v8" stroke="#fff" strokeWidth="1.100" /><path d="M13.500 4.500h2v2h-2z" fill="#fff" /></Svg></TaskItem>
          <TaskItem $ml={3}>
            <Svg s={23}><path d="M18.500 15A7.300 7.300 0 1119.200 12H6" stroke="#4ec3f5" strokeWidth="4" /><path d="M3 21C-1 17 7 5 15 2c4-1.500 6 0 5 3.500M3 21c1.500 1 4 0 6-1.500" stroke="#f5c12e" strokeWidth="1.700" /></Svg>
          </TaskItem>
          <TaskItem $ml={1}>
            <Svg s={23} h={24}><path d="M2 6l2-2 2 3c2-1 3-1 4-1 0-3 2-5 4-6 0 4 3 5 5 7l1-2c3 5 2 9 1 12a10.300 10.300 0 01-20-2C0 12 1 9 2 6z" fill="#ff7a1c" /><path d="M14 0c0 4 3 5 5 7 2 3 3 6 1 10-1-4-3-6-6-7-2-3-2-7 0-10z" fill="#ffd23a" /><path d="M1 13c1 12 17 13 20 3-4 4-8 5-12 2C6 17 4 14 1 13z" fill="#f2304c" /><circle cx="11.500" cy="12.500" r="4.300" fill="#8a3ff0" /></Svg>
          </TaskItem>
          <TaskItem $ml={1}>
            <Svg s={22} h={18}><path d="M0 0h9l1.500 2H22v16H0z" fill="#f8d775" /><path d="M0 0h9v2H0z" fill="#e8a62a" /><path d="M4.500 18v-7.500h13V18h-3v-4h-7v4z" fill="#3aa5ea" /></Svg>
          </TaskItem>
          <TaskItem $ml={1} $on><Three v={0} /></TaskItem>
          <TaskItem $ml={1} $run><Three v={1} /></TaskItem>
          <TaskItem $ml={1} $run><Three v={2} /></TaskItem>
          <Tray>
            <Svg s={17} h={15}><path d="M5 2.500h11v8H3.500V6M1.500.5h4v4h-4zM3.500 4.500V14M7 13.500h7M10.500 10.500v3" stroke="#fff" strokeWidth="1.100" /></Svg>
            <FitBox $w={17} $ml={7}><Svg s={17} h={15}><path d="M1 5h2.500L7 2v11L3.500 10H1z" stroke="#fff" strokeWidth="1.100" /><path d="M9.500 5.500q1.500 2 0 4M12 3.500q3 4 0 8M14.500 2q4 5.500 0 11" stroke="#fff" strokeWidth="1.100" /></Svg></FitBox>
            <FitBox $w={17} $ml={11}><Svg s={17} h={16}><path d="M7 8C2 7-1 11 1.500 13.500 4 15 6 12 6 10M5.500 11L12 1.500q2-2 2.500 0L7.500 13l-2.500 1zM9 12l5-5q2-1 2 1l-3 4" stroke="#fff" strokeWidth="1.200" /></Svg></FitBox>
            <Fit w={12} ml={11} size={18}>A</Fit>
            <ClockBox><Fit w={21} size={11}>9:53</Fit><Fit w={59} size={11}>2023/03/14</Fit></ClockBox>
            <FitBox $w={17} $ml={17}><Svg s={17} h={17}><path d="M.7 1.500h15.600v12H11L8.500 16 6 13.500H.7z" stroke="#fff" strokeWidth="1.200" /></Svg></FitBox>
            <ShowDesktop />
          </Tray>
        </TaskBar>

        <Marker />
        <Tip><Fit w={345}>#15021035, atelier lapin 555, エキスパートが注文した, エキスパートID 555</Fit></Tip>
      </Session>
    </Desktop>
  );
}
